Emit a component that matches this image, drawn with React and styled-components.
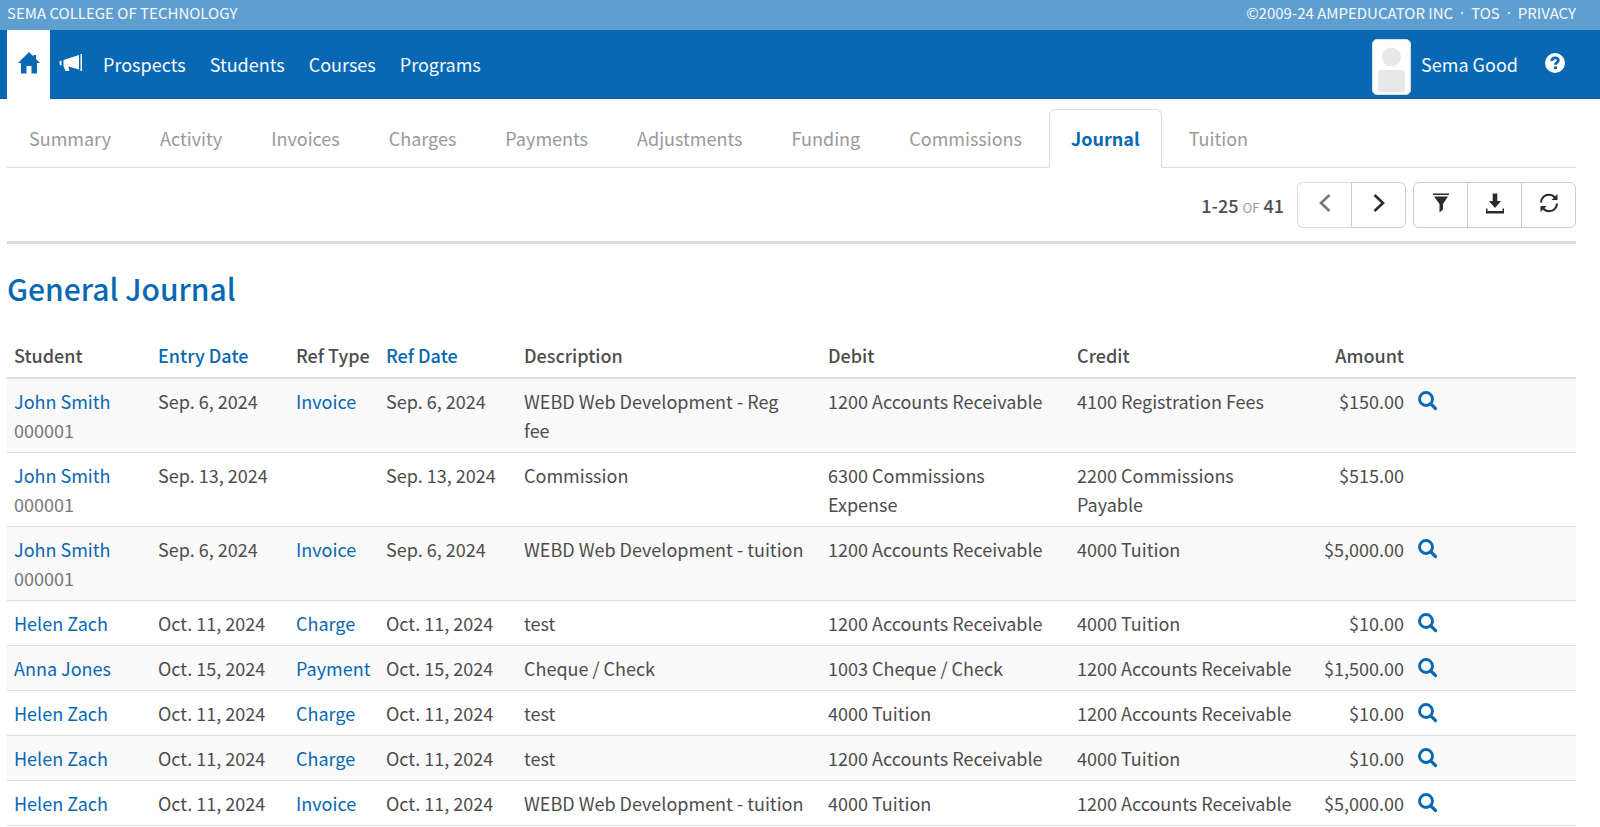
import React from "react";
import styled, { createGlobalStyle } from "styled-components";

const blue = "#0868b4";
const line = "#dddddd";

const GlobalStyle = createGlobalStyle`
  *, *::before, *::after { box-sizing: border-box; }
  body {
    margin: 0;
    background: #ffffff;
    color: #4d4d4d;
    font-family: "Noto Sans CJK SC", "Noto Sans", sans-serif;
    font-size: 18px;
    line-height: 29px;
  }
  a { color: ${blue}; text-decoration: none; }
  a:hover { text-decoration: underline; }
  svg { display: block; }
`;

const TopBar = styled.div`
  display: flex;
  justify-content: space-between;
  height: 30px;
  padding: 0 24px 0 7px;
  background: #5f9fd0;
  color: #f4f9fd;
  font-size: 15px;
  line-height: 25px;
  text-transform: uppercase;
  a { color: inherit; }
`;

const Legal = styled.div`
  display: flex;
  gap: 7px;
`;

const Dot = styled.span`
  font-family: "Noto Sans", sans-serif;
`;

const NavBar = styled.header`
  display: flex;
  align-items: stretch;
  height: 69px;
  padding: 0 24px 0 7px;
  background: ${blue};
  border-bottom: 1px solid #0a5ca6;
`;

const NavLinks = styled.nav`
  display: flex;
  align-items: stretch;
  flex: 1;
`;

const HomeLink = styled.a`
  display: flex;
  align-items: center;
  justify-content: center;
  width: 43px;
  margin-bottom: -1px;
  padding-bottom: 4px;
  background: #ffffff;
`;

const IconLink = styled.a`
  && { color: #ffffff; }
  display: flex;
  align-items: center;
  padding: 0 0 3px 9px;
  margin-right: 8px;
`;

const NavLink = styled.a`
  && { color: #f4f9fd; }
  display: flex;
  align-items: center;
  padding: 0 12px;
`;

const UserArea = styled.div`
  display: flex;
  align-items: center;
`;

const Avatar = styled.span`
  display: block;
  width: 39px;
  height: 56px;
  margin-top: 6px;
  background: #ffffff;
  border: 1px solid ${line};
  border-radius: 5px;
`;

const UserLink = styled.a`
  && { color: #f4f9fd; }
  display: flex;
  align-items: center;
  gap: 10px;
`;

const HelpLink = styled.a`
  && { color: #ffffff; }
  padding: 0 11px 3px 27px;
`;

const Main = styled.main`
  padding: 0 24px 0 7px;
`;

const Tabs = styled.nav`
  display: flex;
  gap: 5px;
  padding-top: 10px;
  border-bottom: 1px solid ${line};
`;

const Tab = styled.a`
  && { color: ${(p) => (p.$active ? blue : "#999999")}; }
  padding: 14px 21px;
  margin-bottom: -1px;
  border: 1px solid ${(p) => (p.$active ? line : "transparent")};
  border-bottom-color: ${(p) => (p.$active ? "#ffffff" : "transparent")};
  border-radius: 6px 6px 0 0;
  font-weight: ${(p) => (p.$active ? 700 : 400)};
`;

const Toolbar = styled.div`
  display: flex;
  align-items: center;
  justify-content: flex-end;
  gap: 7px;
  padding: 14px 0 13px;
  border-bottom: 3px solid ${line};
`;

const Range = styled.div`
  margin-right: 6px;
  padding-top: 2px;
  font-weight: 500;
  small {
    color: #999999;
    font-size: 13px;
    font-weight: 400;
  }
`;

const ButtonGroup = styled.div`
  display: flex;
`;

const ToolButton = styled.button`
  display: flex;
  align-items: center;
  justify-content: center;
  width: 55px;
  height: 46px;
  margin-left: -1px;
  padding: 0 0 4px;
  color: #2b2b2b;
  background: #ffffff;
  border: 1px solid #cccccc;
  &:first-child { margin-left: 0; border-radius: 6px 0 0 6px; }
  &:last-child { border-radius: 0 6px 6px 0; }
  &:disabled { color: #777777; border-color: ${line}; border-right-color: #cccccc; }
`;

const Title = styled.h1`
  margin: 23px 0 25px;
  color: ${blue};
  font-size: 30px;
  font-weight: 500;
  line-height: 42px;
`;

const Table = styled.table`
  width: 100%;
  border-collapse: separate;
  border-spacing: 0;
  table-layout: fixed;
`;

const Col = styled.col`
  width: ${(p) => (p.$width ? `${p.$width}px` : "auto")};
`;

const HeadCell = styled.th`
  padding: 7px;
  border-bottom: 2px solid ${line};
  font-weight: 500;
  text-align: ${(p) => (p.$right ? "right" : "left")};
  white-space: nowrap;
`;

const Row = styled.tr`
  &:nth-child(odd) { background: #f9f9f9; }
`;

const Cell = styled.td`
  padding: 8px ${(p) => (p.$wide ? 16 : 7)}px 7px 7px;
  border-bottom: 1px solid ${line};
  text-align: ${(p) => (p.$right ? "right" : "left")};
  vertical-align: top;
`;

const StudentId = styled.div`
  color: #777777;
`;

const SearchLink = styled.a`
  display: block;
  width: fit-content;
  padding-top: 4px;
`;

const HomeIcon = () => (
  <svg width="22" height="22" viewBox="0 0 22 22" fill={blue}>
    <path d="M11 0l4.500 4.500V3h2.500v4l4 4h-3v10.500h-5.500V14h-5v7.500H3V11H0z" />
  </svg>
);

const HornIcon = () => (
  <svg width="24" height="18" viewBox="0 0 24 18" fill="currentColor">
    <path d="M21.500 0H23v17h-1.500zM20 1v14.500L9.500 12.500l.8 4.500H6.500L4.500 12V6zM2.500 6.500v5C1 11.500.5 10.500.5 9s.5-2.500 2-2.500z" />
  </svg>
);

const HelpIcon = () => (
  <svg width="20" height="20" viewBox="0 0 20 20">
    <circle cx="10" cy="10" r="10" fill="#fff" />
    <path d="M6.800 8C6.800 5.800 8 4.900 10 4.900s3.300 1 3.300 2.600c0 2-2.900 2.100-2.900 4.300" fill="none" stroke={blue} strokeWidth="2.800" />
    <path d="M8.900 13.400h3v2.800h-3z" fill={blue} />
  </svg>
);

const AvatarArt = () => (
  <svg width="37" height="54" viewBox="0 0 37 54" fill="#e9e8e8">
    <circle cx="18.500" cy="17" r="9.500" />
    <rect x="5" y="30" width="27" height="22" rx="2" />
  </svg>
);

const Chevron = ({ flip }) => (
  <svg width="12" height="20" viewBox="0 0 12 20" fill="none" stroke="currentColor" strokeWidth="2.600">
    <path d={flip ? "M1.500 2 10 10l-8.500 8" : "M10.500 2 2 10l8.500 8"} />
  </svg>
);

const FilterIcon = () => (
  <svg width="16" height="20" viewBox="0 0 16 20" fill="currentColor">
    <path d="M0 0.500h16v1.500H0zM1 3.500h14L10 11v5.500L6.500 19.500V11z" />
  </svg>
);

const DownloadIcon = () => (
  <svg width="18" height="21" viewBox="0 0 18 21" fill="currentColor">
    <path d="M6.700 0.500h4.600V8H15l-6 7-6-7h3.700zM0 15.500h1.500V18h15v-2.500H18V20.500H0z" />
  </svg>
);

const RefreshIcon = () => (
  <svg width="20" height="20" viewBox="0 0 20 20" fill="currentColor">
    <path d="M2 9.500C2 5 5.500 1.800 9.800 1.800c2.600 0 4.600 1 6 2.800M18 10.500c0 4.500-3.500 7.700-7.800 7.700-2.600 0-4.600-1-6-2.800" fill="none" stroke="currentColor" strokeWidth="2" />
    <path d="M18.500 1v6h-6zM1.500 19v-6h6z" />
  </svg>
);

const SearchIcon = () => (
  <svg width="20" height="20" viewBox="0 0 20 20" fill="none" stroke="currentColor">
    <circle cx="8" cy="8" r="6.500" strokeWidth="2.900" />
    <path d="M12.800 12.800l4.700 4.700" strokeWidth="3.200" strokeLinecap="round" />
  </svg>
);

const tabs = ["Summary", "Activity", "Invoices", "Charges", "Payments", "Adjustments", "Funding", "Commissions", "Journal", "Tuition"];

const columns = [
  { label: "Student", width: 144 },
  { label: "Entry Date", width: 138, sortable: true },
  { label: "Ref Type", width: 90 },
  { label: "Ref Date", width: 138, sortable: true },
  { label: "Description", width: 304 },
  { label: "Debit", width: 249 },
  { label: "Credit", width: 244 },
  { label: "Amount", width: 97, right: true },
  { label: "" },
];

const AR = "1200 Accounts Receivable";
const entries = [
  { name: "John Smith", id: "000001", date: "Sep. 6, 2024", type: "Invoice", text: "WEBD Web Development - Reg fee", debit: AR, credit: "4100 Registration Fees", amount: "$150.00" },
  { name: "John Smith", id: "000001", date: "Sep. 13, 2024", text: "Commission", debit: "6300 Commissions Expense", credit: "2200 Commissions Payable", amount: "$515.00" },
  { name: "John Smith", id: "000001", date: "Sep. 6, 2024", type: "Invoice", text: "WEBD Web Development - tuition", debit: AR, credit: "4000 Tuition", amount: "$5,000.00" },
  { name: "Helen Zach", date: "Oct. 11, 2024", type: "Charge", text: "test", debit: AR, credit: "4000 Tuition", amount: "$10.00" },
  { name: "Anna Jones", date: "Oct. 15, 2024", type: "Payment", text: "Cheque / Check", debit: "1003 Cheque / Check", credit: AR, amount: "$1,500.00" },
  { name: "Helen Zach", date: "Oct. 11, 2024", type: "Charge", text: "test", debit: "4000 Tuition", credit: AR, amount: "$10.00" },
  { name: "Helen Zach", date: "Oct. 11, 2024", type: "Charge", text: "test", debit: AR, credit: "4000 Tuition", amount: "$10.00" },
  { name: "Helen Zach", date: "Oct. 11, 2024", type: "Invoice", text: "WEBD Web Development - tuition", debit: "4000 Tuition", credit: AR, amount: "$5,000.00" },
];

export default function App() {
  return (
    <>
      <GlobalStyle />
      <TopBar>
        <span>Sema College of Technology</span>
        <Legal>
          <span>©2009-24 AmpEducator Inc</span>
          <Dot>·</Dot>
          <a href="#tos">TOS</a>
          <Dot>·</Dot>
          <a href="#privacy">Privacy</a>
        </Legal>
      </TopBar>
      <NavBar>
        <NavLinks aria-label="Main">
          <HomeLink href="#home" aria-label="Home"><HomeIcon /></HomeLink>
          <IconLink href="#announcements" aria-label="Announcements"><HornIcon /></IconLink>
          {["Prospects", "Students", "Courses", "Programs"].map((item) => (
            <NavLink key={item} href={`#${item.toLowerCase()}`}>{item}</NavLink>
          ))}
        </NavLinks>
        <UserArea>
          <UserLink href="#profile">
            <Avatar><AvatarArt /></Avatar>
            Sema Good
          </UserLink>
          <HelpLink href="#help" aria-label="Help"><HelpIcon /></HelpLink>
        </UserArea>
      </NavBar>
      <Main>
        <Tabs aria-label="Accounting">
          {tabs.map((tab) => (
            <Tab key={tab} href={`#${tab.toLowerCase()}`} $active={tab === "Journal"}>{tab}</Tab>
          ))}
        </Tabs>
        <Toolbar>
          <Range>1-25 <small>OF</small> 41</Range>
          <ButtonGroup>
            <ToolButton type="button" aria-label="Previous page" disabled><Chevron /></ToolButton>
            <ToolButton type="button" aria-label="Next page"><Chevron flip /></ToolButton>
          </ButtonGroup>
          <ButtonGroup>
            <ToolButton type="button" aria-label="Filter"><FilterIcon /></ToolButton>
            <ToolButton type="button" aria-label="Download"><DownloadIcon /></ToolButton>
            <ToolButton type="button" aria-label="Refresh"><RefreshIcon /></ToolButton>
          </ButtonGroup>
        </Toolbar>
        <Title>General Journal</Title>
        <Table>
          <colgroup>
            {columns.map((c) => <Col key={c.label} $width={c.width} />)}
          </colgroup>
          <thead>
            <tr>
              {columns.map((c) => (
                <HeadCell key={c.label} scope="col" $right={c.right}>
                  {c.sortable ? <a href="#sort">{c.label}</a> : c.label}
                </HeadCell>
              ))}
            </tr>
          </thead>
          <tbody>
            {entries.map((e, i) => (
              <Row key={i}>
                <Cell>
                  <a href="#student">{e.name}</a>
                  {e.id && <StudentId>{e.id}</StudentId>}
                </Cell>
                <Cell>{e.date}</Cell>
                <Cell>{e.type && <a href="#reference">{e.type}</a>}</Cell>
                <Cell>{e.date}</Cell>
                <Cell $wide>{e.text}</Cell>
                <Cell $wide>{e.debit}</Cell>
                <Cell $wide>{e.credit}</Cell>
                <Cell $right>{e.amount}</Cell>
                <Cell>
                  {e.type && <SearchLink href="#entry" aria-label="View entry"><SearchIcon /></SearchLink>}
                </Cell>
              </Row>
            ))}
          </tbody>
        </Table>
      </Main>
    </>
  );
}
